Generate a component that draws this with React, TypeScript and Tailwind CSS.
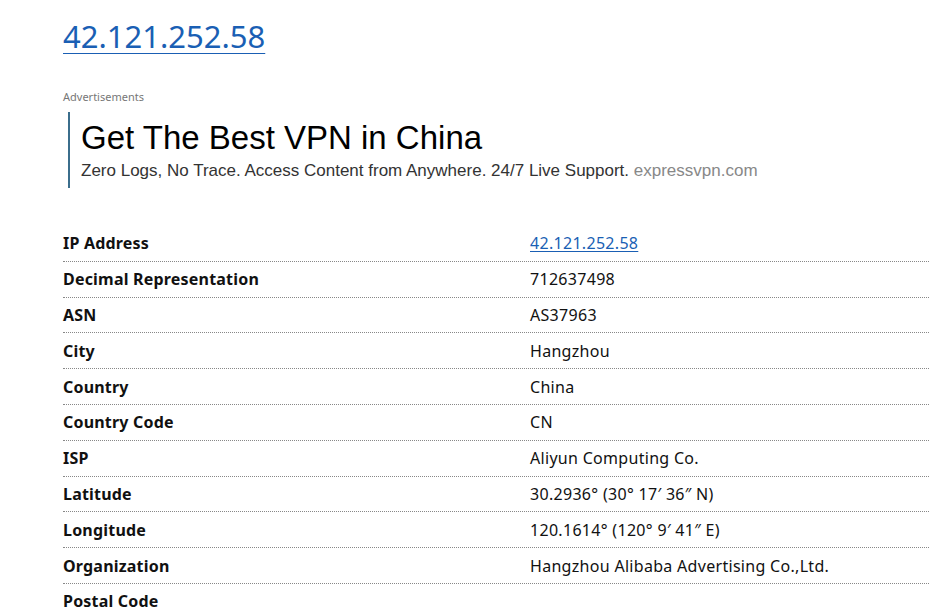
const rows: { label: string; value: string; link?: boolean }[] = [
  { label: 'IP Address', value: '42.121.252.58', link: true },
  { label: 'Decimal Representation', value: '712637498' },
  { label: 'ASN', value: 'AS37963' },
  { label: 'City', value: 'Hangzhou' },
  { label: 'Country', value: 'China' },
  { label: 'Country Code', value: 'CN' },
  { label: 'ISP', value: 'Aliyun Computing Co.' },
  { label: 'Latitude', value: '30.2936° (30° 17′ 36″ N)' },
  { label: 'Longitude', value: '120.1614° (120° 9′ 41″ E)' },
  { label: 'Organization', value: 'Hangzhou Alibaba Advertising Co.,Ltd.' },
  { label: 'Postal Code', value: '' },
];

export default function App() {
  return (
    <div className="h-[607px] w-[930px] overflow-hidden bg-white font-['Noto_Sans',sans-serif] text-[#111]">
      <div className="pl-[63px] pt-[14px]">
        <h1 className="text-[31px] leading-[44px] font-normal">
          <a href="#" className="text-[#1a5fb4] underline decoration-1 underline-offset-[5px]">
            42.121.252.58
          </a>
        </h1>

        <div className="mt-[32px] text-[11px] leading-[14px] text-[#777]">Advertisements</div>

        {/* ad block */}
        <div className="mt-[8px] ml-[5px] border-l-2 border-[#3b6e8c] pl-[11px] pt-[6px] pb-[6px] font-['Liberation_Sans',Arial,sans-serif]">
          <div className="text-[33px] leading-[40px] text-black">Get The Best VPN in China</div>
          <div className="mt-[2px] text-[17px] leading-[22px] text-[#333]">
            Zero Logs, No Trace. Access Content from Anywhere. 24/7 Live Support.{' '}
            <span className="text-[#888]">expressvpn.com</span>
          </div>
        </div>

        <div className="mt-[38px] w-[934px]">
          {rows.map((r) => (
            <div key={r.label} className="grid grid-cols-2 border-b border-dotted border-[#888] h-[35.8px] items-center text-[16px]">
              <div className="font-bold tracking-[0.2px]">{r.label}</div>
              <div className="tracking-[0.3px]">
                {r.link ? (
                  <a href="#" className="text-[#1a5fb4] underline underline-offset-2">{r.value}</a>
                ) : (
                  r.value
                )}
              </div>
            </div>
          ))}
        </div>
      </div>
    </div>
  );
}
